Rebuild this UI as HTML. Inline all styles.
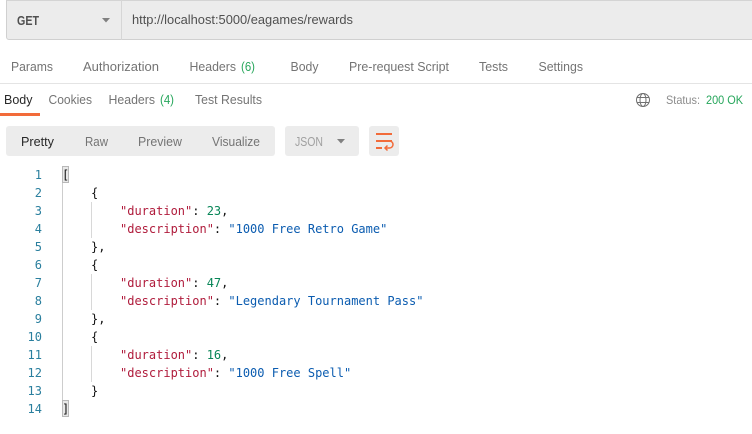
<!DOCTYPE html>
<html><head><meta charset="utf-8"><title>Rewards</title>
<style>
html,body{margin:0;padding:0;background:#fff;width:752px;height:434px;overflow:hidden}
svg{display:block}
.s{font-family:"Liberation Sans",sans-serif;font-size:13px}
.g{fill:#747474}.d{fill:#505050}.k{fill:#282828}.ok{fill:#26a65b}
.m{font-family:"DejaVu Sans Mono",monospace;font-size:12px;white-space:pre}
.n{fill:#2a7f9e;text-anchor:end}.p{fill:#111}.ke{fill:#b01c3c}.v{fill:#0b5cb0}.u{fill:#098658}
</style></head><body>
<svg width="752" height="434" viewBox="0 0 752 434" xmlns="http://www.w3.org/2000/svg">
<path d="M6.5 0V37a2.5 2.5 0 0 0 2.5 2.500H753V0Z" fill="#ececec" stroke="#d0d0d0"/>
<path d="M6.5 0.500H752" stroke="#d4d4d4"/>
<rect x="121" y="0" width="1" height="40" fill="#d6d6d6"/>
<text class="s" x="17" y="25" font-weight="700" fill="#505050" textLength="22" lengthAdjust="spacingAndGlyphs">GET</text>
<path d="M102 18h8l-4 4.500Z" fill="#808080"/>
<text class="s" x="132" y="24" fill="#505050" textLength="221" lengthAdjust="spacingAndGlyphs">http://localhost:5000/eagames/rewards</text>

<text class="s g" x="11" y="71" textLength="42" lengthAdjust="spacingAndGlyphs">Params</text>
<text class="s g" x="83" y="71" textLength="76" lengthAdjust="spacingAndGlyphs">Authorization</text>
<text class="s g" x="189.500" y="71" textLength="46.500" lengthAdjust="spacingAndGlyphs">Headers</text>
<text class="s ok" x="241" y="71" textLength="14" lengthAdjust="spacingAndGlyphs">(6)</text>
<text class="s g" x="290.500" y="71" textLength="28" lengthAdjust="spacingAndGlyphs">Body</text>
<text class="s g" x="349" y="71" textLength="100" lengthAdjust="spacingAndGlyphs">Pre-request Script</text>
<text class="s g" x="479" y="71" textLength="29" lengthAdjust="spacingAndGlyphs">Tests</text>
<text class="s g" x="538.500" y="71" textLength="44.500" lengthAdjust="spacingAndGlyphs">Settings</text>
<rect x="0" y="83" width="752" height="1" fill="#e4e4e4"/>

<text class="s k" x="4" y="104" textLength="28.500" lengthAdjust="spacingAndGlyphs">Body</text>
<text class="s g" x="48.500" y="104" textLength="43.500" lengthAdjust="spacingAndGlyphs">Cookies</text>
<text class="s g" x="108.500" y="104" textLength="46.500" lengthAdjust="spacingAndGlyphs">Headers</text>
<text class="s ok" x="160" y="104" textLength="14" lengthAdjust="spacingAndGlyphs">(4)</text>
<text class="s g" x="195" y="104" textLength="67" lengthAdjust="spacingAndGlyphs">Test Results</text>
<rect x="0" y="113" width="40" height="3" fill="#f26b3a"/>

<g fill="none" stroke="#707070" stroke-width="1">
<circle cx="643" cy="100" r="6.500"/>
<ellipse cx="643" cy="100" rx="3" ry="6.500"/>
<path d="M637 97.500h12M637 102.500h12"/>
</g>
<text x="666" y="104" font-family="Liberation Sans,sans-serif" font-size="12" fill="#8c8c8c" textLength="34" lengthAdjust="spacingAndGlyphs">Status:</text>
<text class="ok" x="706" y="104" font-family="Liberation Sans,sans-serif" font-size="12" textLength="37" lengthAdjust="spacingAndGlyphs">200 OK</text>

<rect x="6" y="126" width="269" height="30" rx="3" fill="#ececec"/>
<text class="s k" x="21" y="146" textLength="33" lengthAdjust="spacingAndGlyphs">Pretty</text>
<text class="s g" x="85" y="146" textLength="23" lengthAdjust="spacingAndGlyphs">Raw</text>
<text class="s g" x="138" y="146" textLength="44" lengthAdjust="spacingAndGlyphs">Preview</text>
<text class="s g" x="212" y="146" textLength="48" lengthAdjust="spacingAndGlyphs">Visualize</text>
<rect x="285" y="126" width="74" height="30" rx="3" fill="#ececec"/>
<text x="295" y="146" font-family="Liberation Sans,sans-serif" font-size="13" fill="#a0a0a0" textLength="28" lengthAdjust="spacingAndGlyphs">JSON</text>
<path d="M337 139h8l-4 4.500Z" fill="#808080"/>
<rect x="369" y="126" width="30" height="30" rx="3" fill="#ececec"/>
<g fill="none" stroke="#f26b3a" stroke-width="2">
<path d="M376 134h16M376 141h16M376 148h6"/>
<path d="M385 148h4.500a3.500 3.500 0 0 0 0-7" stroke-width="1.500"/>
<path d="M387.500 145.500l-2.500 2.500 2.500 2.500" stroke-width="1.500"/>
</g>

<rect x="62.500" y="166.500" width="6" height="16" fill="#e8e8e8" stroke="#b8b8b8"/>
<rect x="62.500" y="400.500" width="6" height="16" fill="#e8e8e8" stroke="#b8b8b8"/>
<rect x="62" y="183" width="1" height="217" fill="#cdcdcd"/>
<rect x="91" y="202" width="1" height="36" fill="#d8d8d8"/>
<rect x="91" y="274" width="1" height="36" fill="#d8d8d8"/>
<rect x="91" y="346" width="1" height="36" fill="#d8d8d8"/>

<g class="m">
<text class="n" x="42" y="179">1</text><text class="n" x="42" y="197">2</text><text class="n" x="42" y="215">3</text><text class="n" x="42" y="233">4</text><text class="n" x="42" y="251">5</text><text class="n" x="42" y="269">6</text><text class="n" x="42" y="287">7</text><text class="n" x="42" y="305">8</text><text class="n" x="42" y="323">9</text><text class="n" x="42" y="341">10</text><text class="n" x="42" y="359">11</text><text class="n" x="42" y="377">12</text><text class="n" x="42" y="395">13</text><text class="n" x="42" y="413">14</text>

<text class="p" x="62" y="179">[</text>
<text class="p" x="91" y="197">{</text>
<text x="120" y="215"><tspan class="ke">"duration"</tspan><tspan class="p">: </tspan><tspan class="u">23</tspan><tspan class="p">,</tspan></text>
<text x="120" y="233"><tspan class="ke">"description"</tspan><tspan class="p">: </tspan><tspan class="v">"1000 Free Retro Game"</tspan></text>
<text class="p" x="91" y="251">},</text>
<text class="p" x="91" y="269">{</text>
<text x="120" y="287"><tspan class="ke">"duration"</tspan><tspan class="p">: </tspan><tspan class="u">47</tspan><tspan class="p">,</tspan></text>
<text x="120" y="305"><tspan class="ke">"description"</tspan><tspan class="p">: </tspan><tspan class="v">"Legendary Tournament Pass"</tspan></text>
<text class="p" x="91" y="323">},</text>
<text class="p" x="91" y="341">{</text>
<text x="120" y="359"><tspan class="ke">"duration"</tspan><tspan class="p">: </tspan><tspan class="u">16</tspan><tspan class="p">,</tspan></text>
<text x="120" y="377"><tspan class="ke">"description"</tspan><tspan class="p">: </tspan><tspan class="v">"1000 Free Spell"</tspan></text>
<text class="p" x="91" y="395">}</text>
<text class="p" x="62" y="413">]</text>
</g>
</svg>
</body></html>
